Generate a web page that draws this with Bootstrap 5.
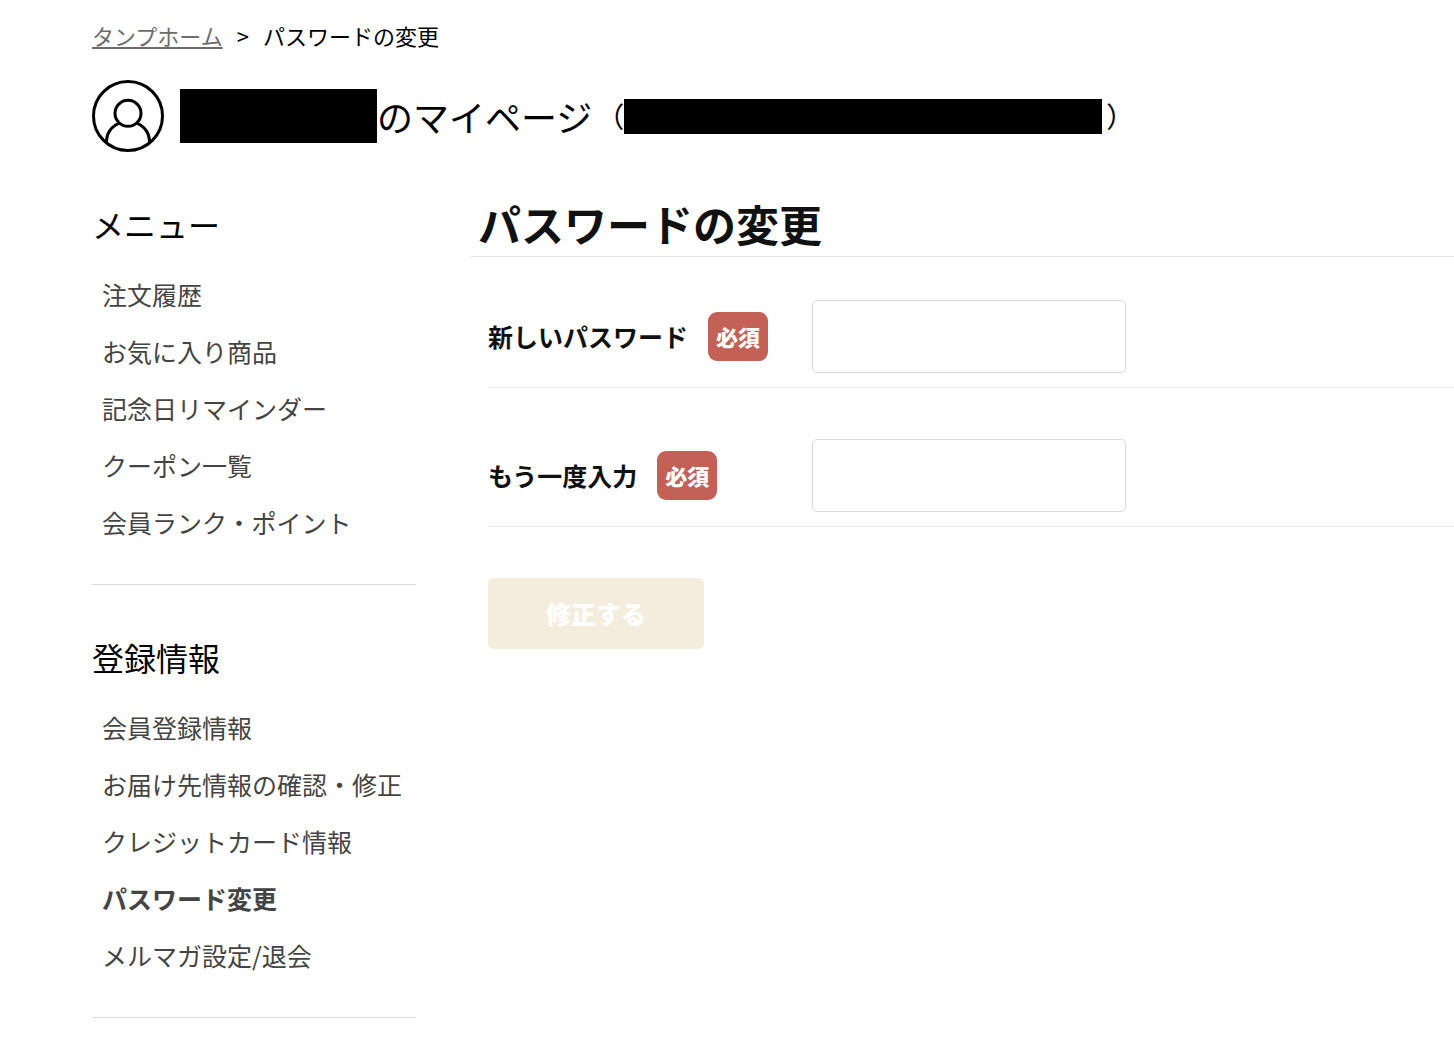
<!DOCTYPE html>
<html lang="ja">
<head>
<meta charset="utf-8">
<meta name="viewport" content="width=device-width, initial-scale=1">
<title>パスワードの変更</title>
<link rel="stylesheet" href="https://cdn.jsdelivr.net/npm/bootstrap@5.3.0/dist/css/bootstrap.min.css">
<style>
  body { font-family: "Noto Sans CJK JP", sans-serif; color: #000; background: #fff; }
  .page { padding: 19px 0 38px 92px; }
  .crumbs { --bs-breadcrumb-divider: ">"; --bs-breadcrumb-divider-color: #000; --bs-breadcrumb-item-padding-x: 14px;
    --bs-breadcrumb-font-size: 22px; --bs-breadcrumb-item-active-color: #000; line-height: 32px; margin-bottom: 29px; }
  .crumbs a { color: #6c6c6c; }
  .avatar { width: 72px; height: 72px; flex: none; }
  .owner { font-size: 36px; line-height: 54px; font-weight: 400; }
  .masked { background: #000; flex: none; }
  .masked-name { width: 197px; height: 54px; }
  .masked-mail { width: 478px; height: 35px; }
  .mail { font-size: 28px; padding-left: 4px; }
  .columns { margin-top: 48px; gap: 54px; }
  .side { width: 324px; }
  .side section { padding-bottom: 33px; border-bottom: 1px solid #d9d9d9; }
  .side section + section { margin-top: 48px; }
  .side h2 { font-size: 32px; line-height: 48px; font-weight: 400; margin-bottom: 18px; }
  .side .nav-link { font-size: 25px; line-height: 57px; padding: 0 0 0 10px; color: #444; white-space: nowrap; }
  .side .nav-link.active { font-weight: 700; }
  .content-title { font-size: 43px; line-height: 46px; font-weight: 700; color: #111; padding: 0 0 10px 8px; border-bottom: 1px solid #e8e8e8; }
  .pass-form { padding-left: 18px; }
  .field { padding: 43px 0 14px; border-bottom: 1px solid #e8e8e8; }
  .field + .field { margin-top: 8px; }
  .field-label { width: 324px; font-size: 25px; font-weight: 700; color: #111; gap: 20px; }
  .need { font-size: 22px; line-height: 49px; padding: 0 8px; border-radius: 9px; background: #c46156; color: #fff; font-weight: 900; }
  .field .form-control { width: 314px; height: 73px; font-size: 25px; border-color: #dadada; border-radius: 5px; }
  .send { --bs-btn-disabled-bg: #f4ecdc; --bs-btn-disabled-border-color: #f4ecdc; --bs-btn-disabled-color: #fff; --bs-btn-disabled-opacity: 1;
    width: 216px; height: 71px; margin-top: 51px; font-size: 25px; font-weight: 900; border-radius: 6px; }
</style>
<script defer src="https://cdn.jsdelivr.net/npm/bootstrap@5.3.0/dist/js/bootstrap.bundle.min.js"></script>
</head>
<body>
<div class="page">
  <nav aria-label="パンくず">
    <ol class="breadcrumb crumbs">
      <li class="breadcrumb-item"><a href="#">タンプホーム</a></li>
      <li class="breadcrumb-item active" aria-current="page">パスワードの変更</li>
    </ol>
  </nav>

  <header class="d-flex align-items-center gap-3">
    <svg class="avatar" viewBox="0 0 72 72" fill="none" stroke="#000" stroke-width="3" aria-hidden="true">
      <circle cx="36" cy="36" r="34.5"/>
      <circle cx="36" cy="33.3" r="13"/>
      <path d="M14.500 62.500C14.500 53 19.500 46.500 27.500 43.200M44.500 43.200C52.500 46.500 57.500 53 57.500 62.500"/>
    </svg>
    <div class="owner d-flex align-items-center text-nowrap">
      <span class="masked masked-name"></span>
      <span>のマイページ</span>
      <span class="mail d-flex align-items-center">（<span class="masked masked-mail"></span><span class="ps-1">）</span></span>
    </div>
  </header>

  <div class="columns d-flex align-items-start">
    <aside class="side flex-shrink-0">
      <section>
        <h2>メニュー</h2>
        <nav class="nav flex-column">
          <a class="nav-link" href="#">注文履歴</a>
          <a class="nav-link" href="#">お気に入り商品</a>
          <a class="nav-link" href="#">記念日リマインダー</a>
          <a class="nav-link" href="#">クーポン一覧</a>
          <a class="nav-link" href="#">会員ランク・ポイント</a>
        </nav>
      </section>
      <section>
        <h2>登録情報</h2>
        <nav class="nav flex-column">
          <a class="nav-link" href="#">会員登録情報</a>
          <a class="nav-link" href="#">お届け先情報の確認・修正</a>
          <a class="nav-link" href="#">クレジットカード情報</a>
          <a class="nav-link active" aria-current="page" href="#">パスワード変更</a>
          <a class="nav-link" href="#">メルマガ設定/退会</a>
        </nav>
      </section>
    </aside>

    <main class="flex-grow-1">
      <h1 class="content-title mb-0">パスワードの変更</h1>
      <form class="pass-form">
        <div class="field d-flex align-items-center">
          <label class="field-label d-flex align-items-center" for="pass-new">新しいパスワード<span class="need">必須</span></label>
          <input class="form-control" type="password" id="pass-new">
        </div>
        <div class="field d-flex align-items-center">
          <label class="field-label d-flex align-items-center" for="pass-again">もう一度入力<span class="need">必須</span></label>
          <input class="form-control" type="password" id="pass-again">
        </div>
        <button class="btn send" type="submit" disabled>修正する</button>
      </form>
    </main>
  </div>
</div>
</body>
</html>
